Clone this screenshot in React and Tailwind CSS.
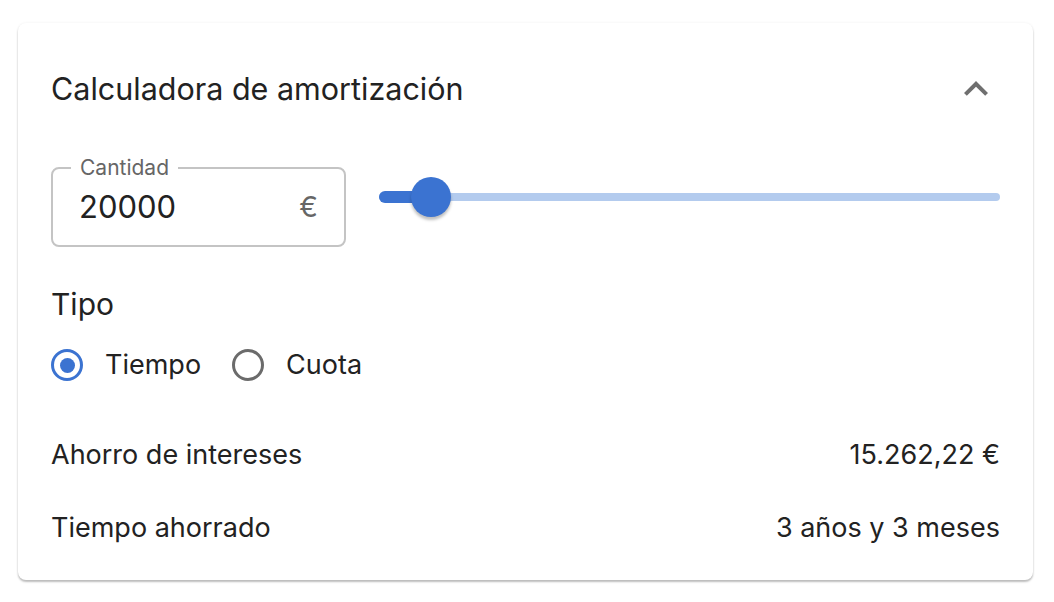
import React, { useState } from 'react';

const Radio = ({ checked, label, onClick }) => (
  <button onClick={onClick} className="flex items-center gap-[22px]">
    <span
      className={`flex h-[32px] w-[32px] items-center justify-center rounded-full border-[3px] ${
        checked ? 'border-[#3b73d1]' : 'border-[#6b6b6b]'
      }`}
    >
      {checked && <span className="h-[15px] w-[15px] rounded-full bg-[#3b73d1]" />}
    </span>
    <span className="text-[27px] text-[#222]">{label}</span>
  </button>
);

const App = () => {
  const [tipo, setTipo] = useState('tiempo');

  return (
    <div className="min-h-[602px] bg-white pl-[18px] pr-[21px] pt-[23px] font-['Inter',sans-serif]">
      <div className="rounded-[8px] bg-white px-[33px] pb-[31px] shadow-[0_2px_2px_rgba(0,0,0,0.25),0_0_3px_rgba(0,0,0,0.06)]">
        {/* Header */}
        <div className="flex h-[132px] items-center justify-between">
          <h2 className="text-[30.5px] text-[#222]">Calculadora de amortización</h2>
          <svg className="h-[48px] w-[48px]" viewBox="0 0 24 24" fill="#6f6f6f">
            <path d="M12 8l-6 6 1.41 1.41L12 10.83l4.59 4.58L18 14z" />
          </svg>
        </div>

        {/* Amount + slider */}
        <div className="mt-[12px] flex items-start gap-[33px]">
          <div className="relative flex h-[80px] w-[295px] items-center rounded-[8px] border-2 border-[#c4c4c4] px-[26px]">
            <span className="absolute left-[18px] top-[-17px] bg-white px-[9px] text-[21px] text-[#666]">
              Cantidad
            </span>
            <span className="flex-1 text-[31px] text-[#222]">20000</span>
            <span className="text-[28px] text-[#666]">€</span>
          </div>
          <div className="relative mt-[10px] flex h-[40px] flex-1 items-center">
            <div className="h-[8px] w-full rounded-full bg-[#b3cbee]" />
            <div className="absolute left-0 h-[12px] w-[52px] rounded-full bg-[#3b73d1]" />
            <div className="absolute left-[32px] h-[40px] w-[40px] rounded-full bg-[#3b73d1] shadow-[0_3px_3px_rgba(0,0,0,0.25)]" />
          </div>
        </div>

        {/* Tipo */}
        <div className="mt-[35px] text-[30px] text-[#222]">Tipo</div>
        <div className="mt-[18px] flex items-center gap-[31px]">
          <Radio checked={tipo === 'tiempo'} label="Tiempo" onClick={() => setTipo('tiempo')} />
          <Radio checked={tipo === 'cuota'} label="Cuota" onClick={() => setTipo('cuota')} />
        </div>

        {/* Results */}
        <div className="mt-[49px] flex items-center justify-between text-[27px] text-[#222]">
          <span>Ahorro de intereses</span>
          <span>15.262,22 €</span>
        </div>
        <div className="mt-[33px] flex items-center justify-between text-[27px] text-[#222]">
          <span>Tiempo ahorrado</span>
          <span>3 años y 3 meses</span>
        </div>
      </div>
    </div>
  );
};

export default App;
